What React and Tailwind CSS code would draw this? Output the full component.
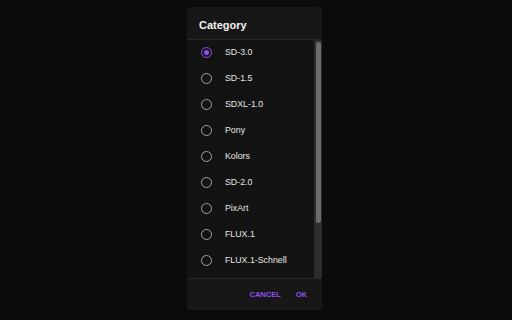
const items = ["SD-3.0", "SD-1.5", "SDXL-1.0", "Pony", "Kolors", "SD-2.0", "PixArt", "FLUX.1", "FLUX.1-Schnell", "Hunyuan", "Other"]

export default function App() {
  const selected = "SD-3.0"
  return (
    <div className="w-[512px] h-[320px] bg-[#0b0b0b] flex justify-center pt-[7px]" style={{ fontFamily: '"Liberation Sans", Arial, sans-serif' }}>
      <div className="w-[135px] h-[303px] ml-[-3px] bg-[#171717] rounded-[3px] flex flex-col">
        <div className="h-[33px] flex items-center pt-[4px] px-[12px] text-[11px] font-bold text-[#f2f2f2] border-b border-[#2a2a2a]">Category</div>
        <div className="flex h-[239px] border-b border-[#262626]">
          <div className="flex-1 overflow-hidden bg-[#131313]">
            <div className="-mt-[1px]">
              {items.map(it => (
                <div key={it} className="h-[26px] flex items-center pl-[14px]">
                  {it === selected ? (
                    <span className="w-[11px] h-[11px] rounded-full border-[1.5px] border-[#9150ee] flex items-center justify-center">
                      <span className="w-[5px] h-[5px] rounded-full bg-[#9150ee]" />
                    </span>
                  ) : (
                    <span className="w-[11px] h-[11px] rounded-full border-[1.5px] border-[#a4a4a4]" />
                  )}
                  <span className="ml-[13px] text-[8.8px] leading-none pt-[1px] text-[#e6e6e6]">{it}</span>
                </div>
              ))}
            </div>
          </div>
          <div className="w-[8px] bg-[#2c2c2c] pt-[2px] flex justify-center">
            <div className="w-[5px] h-[181px] rounded-full bg-[#6b6b6b]" />
          </div>
        </div>
        <div className="flex-1 flex items-center justify-end gap-[15px] pr-[15px] text-[7.5px] font-bold text-[#9150ee]">
          <span>CANCEL</span>
          <span>OK</span>
        </div>
      </div>
    </div>
  )
}
